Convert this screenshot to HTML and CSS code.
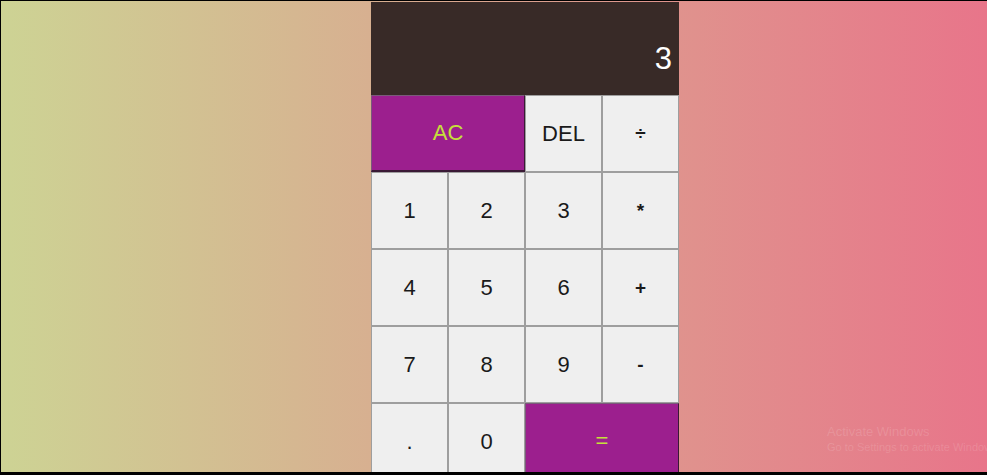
FILE: index.html
```html
<!DOCTYPE html>
<html lang="en">
<head>
<meta charset="utf-8">
<title>Calculator</title>
<link rel="stylesheet" href="styles.css">
</head>
<body>
<div class="screen">
  <div class="calculator">
    <div class="output">
      <div class="current">3</div>
    </div>
    <button class="key span-two accent">AC</button>
    <button class="key">DEL</button>
    <button class="key op">÷</button>
    <button class="key">1</button>
    <button class="key">2</button>
    <button class="key">3</button>
    <button class="key op">*</button>
    <button class="key">4</button>
    <button class="key">5</button>
    <button class="key">6</button>
    <button class="key op">+</button>
    <button class="key">7</button>
    <button class="key">8</button>
    <button class="key">9</button>
    <button class="key op">-</button>
    <button class="key">.</button>
    <button class="key">0</button>
    <button class="key span-two accent">=</button>
  </div>
  <div class="watermark">
    <div class="wm-title">Activate Windows</div>
    <div class="wm-sub">Go to Settings to activate Windows.</div>
  </div>
</div>
</body>
</html>
```

FILE: styles.css
```css
html, body {
  margin: 0;
  padding: 0;
  background: #000;
  height: 475px;
  overflow: hidden;
}

.screen {
  position: relative;
  margin: 1px 0 0 1px;
  height: 471px;
  overflow: hidden;
  background: linear-gradient(to right, #cdd394, #e8758a);
  padding: 1px 0 0 370px;
  box-sizing: border-box;
  font-family: "Liberation Sans", Arial, sans-serif;
}

.calculator {
  display: grid;
  grid-template-columns: repeat(4, 77px);
  grid-template-rows: 93px repeat(5, 77px);
}

.output {
  grid-column: 1 / -1;
  background: #382a27;
  display: flex;
  flex-direction: column;
  justify-content: flex-end;
  align-items: flex-end;
  padding: 0 7px 21px 0;
  box-sizing: border-box;
}

.current {
  color: #fff;
  font-size: 31px;
  line-height: 1;
}

.key {
  font-family: "Liberation Sans", Arial, sans-serif;
  font-size: 22px;
  color: #1a1a1a;
  background: #efefef;
  border: 1px solid #9e9e9e;
  margin: 0;
  padding: 0;
  cursor: pointer;
}

.key.op {
  font-size: 19px;
  font-weight: bold;
}

.span-two {
  grid-column: span 2;
}

.accent {
  background: #9c1f8e;
  color: #c6e03a;
  border-top-color: #7a5a7a;
  border-left-color: #7a5a7a;
  border-right: 1px solid #3a1a36;
  border-bottom: 2px solid #3a1a36;
}

.watermark {
  position: absolute;
  left: 826px;
  top: 423px;
  color: rgba(255, 255, 255, 0.14);
  font-family: "Liberation Sans", Arial, sans-serif;
  white-space: nowrap;
}

.wm-title {
  font-size: 13px;
  line-height: 16px;
}

.wm-sub {
  font-size: 11px;
  line-height: 15px;
}
```
